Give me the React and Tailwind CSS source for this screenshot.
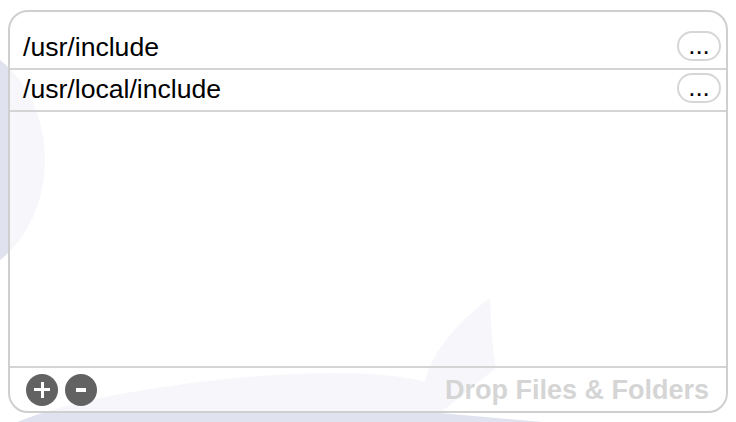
import React from "react";

function Watermark() {
  return (
    <svg className="absolute inset-0" width="736" height="422" viewBox="0 0 736 422">
      <ellipse cx="-55" cy="160" rx="100" ry="120" fill="#e0e3ef" />
      <path
        d="M 8 426 C 60 402, 160 384, 260 376 C 330 371, 390 372, 425 382 C 432 350, 460 320, 490 298 C 491 330, 493 352, 496 368 L 440 413 L 588 426 Z"
        fill="#e0e3ef"
      />
    </svg>
  );
}

function DotsButton() {
  return (
    <div className="mr-[5px] mt-[3px] flex h-[30px] w-[44px] items-end justify-center rounded-full border-2 border-[#d6d6d6] bg-white">
      <span className="mb-[1px] text-[26px] leading-[26px] text-black">...</span>
    </div>
  );
}

function Row({ path }) {
  return (
    <div className="flex h-[42px] items-start justify-between border-b-2 border-[#d4d4d4]">
      <span className="pl-[13px] text-[26.6px] leading-[39px] text-black">{path}</span>
      <DotsButton />
    </div>
  );
}

export default function App() {
  return (
    <div
      className="relative h-[422px] w-[736px] overflow-hidden bg-white"
      style={{ fontFamily: '"Liberation Sans", Arial, sans-serif' }}
    >
      <Watermark />
      <div className="relative ml-[8px] mt-[10px] flex h-[403px] w-[720px] flex-col rounded-[20px] border-2 border-[#cfcfcf] bg-white/[0.73] pt-[16px]">
        <Row path="/usr/include" />
        <Row path="/usr/local/include" />
        <div className="flex-1" />
        <div className="flex h-[45px] items-center justify-between border-t-2 border-[#d4d4d4] pl-[16px] pr-[17px]">
          <div className="flex items-center gap-[7px]">
            <div className="relative flex h-[32px] w-[32px] items-center justify-center rounded-full bg-[#626262]">
              <div className="absolute h-[3px] w-[16px] bg-white" />
              <div className="absolute h-[16px] w-[3px] bg-white" />
            </div>
            <div className="flex h-[32px] w-[32px] items-center justify-center rounded-full bg-[#626262]">
              <div className="h-[4px] w-[10px] bg-white" />
            </div>
          </div>
          <span className="text-[27px] font-bold leading-[30px] text-[#d5d5d5]">Drop Files &amp; Folders</span>
        </div>
      </div>
    </div>
  );
}
